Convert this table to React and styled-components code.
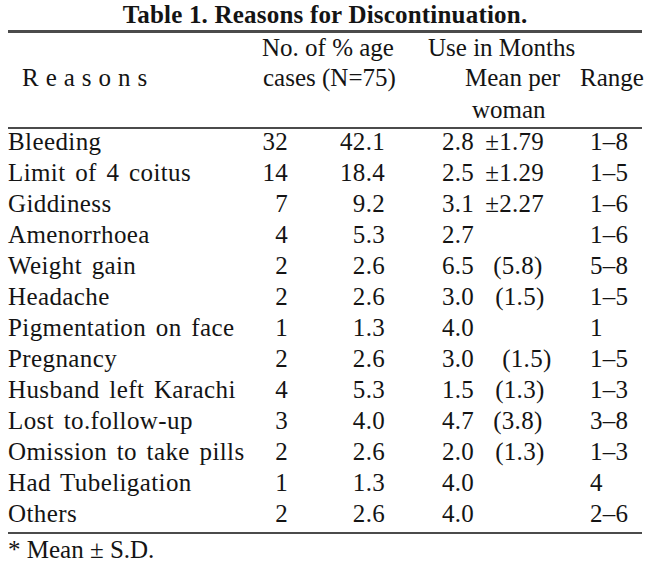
import React from 'react';
import styled, { createGlobalStyle } from 'styled-components';

const GlobalStyle = createGlobalStyle`
  body {
    margin: 0;
    background: #ffffff;
    color: #141414;
    font-family: "Liberation Serif", "Times New Roman", serif;
  }
`;

const COLUMNS = '232px 48px 97px 195px 1fr';

const Page = styled.div`
  width: 650px;
  padding: 0 8px;
  box-sizing: border-box;
  font-size: 25px;
`;

const Title = styled.h1`
  margin: 0;
  font-size: 25px;
  font-weight: bold;
  line-height: 30px;
  text-align: center;
  letter-spacing: 0.2px;
`;

const Rule = styled.div`
  height: ${p => p.$thick}px;
  background: #2b2b2b;
  opacity: 0.85;
`;

const Header = styled.div`
  display: grid;
  grid-template-columns: ${COLUMNS};
  grid-template-rows: 30px 32px 32px;
  line-height: 30px;
`;

const HeadCell = styled.div`
  grid-column: ${p => p.$col};
  grid-row: ${p => p.$row};
  padding-left: ${p => p.$pad || 0}px;
  letter-spacing: ${p => p.$spread || 0}px;
  white-space: nowrap;
`;

const Body = styled.div`
  display: flex;
  flex-direction: column;
`;

const Row = styled.div`
  display: grid;
  grid-template-columns: ${COLUMNS};
  height: 31px;
  line-height: 25px;
  letter-spacing: 0.3px;
  white-space: nowrap;
`;

const Reason = styled.div`
  word-spacing: 3px;
  letter-spacing: 0.4px;
`;

const Num = styled.div`
  text-align: right;
`;

const Mean = styled.div`
  display: flex;
  padding-left: 57px;
`;

const Sd = styled.span`
  margin-left: ${p => p.$shift}px;
`;

const Range = styled.div`
  padding-left: 10px;
`;

const Footnote = styled.div`
  line-height: 30px;
  padding-top: 1px;
`;

const rows = [
  { reason: 'Bleeding', n: '32', pct: '42.1', mean: '2.8', sd: '±1.79', shift: 11, range: '1–8' },
  { reason: 'Limit of 4 coitus', n: '14', pct: '18.4', mean: '2.5', sd: '±1.29', shift: 11, range: '1–5' },
  { reason: 'Giddiness', n: '7', pct: '9.2', mean: '3.1', sd: '±2.27', shift: 11, range: '1–6' },
  { reason: 'Amenorrhoea', n: '4', pct: '5.3', mean: '2.7', range: '1–6' },
  { reason: 'Weight gain', n: '2', pct: '2.6', mean: '6.5', sd: '(5.8)', shift: 19, range: '5–8' },
  { reason: 'Headache', n: '2', pct: '2.6', mean: '3.0', sd: '(1.5)', shift: 21, range: '1–5' },
  { reason: 'Pigmentation on face', n: '1', pct: '1.3', mean: '4.0', range: '1' },
  { reason: 'Pregnancy', n: '2', pct: '2.6', mean: '3.0', sd: '(1.5)', shift: 28, range: '1–5' },
  { reason: 'Husband left Karachi', n: '4', pct: '5.3', mean: '1.5', sd: '(1.3)', shift: 21, range: '1–3' },
  { reason: 'Lost to.follow-up', n: '3', pct: '4.0', mean: '4.7', sd: '(3.8)', shift: 19, range: '3–8' },
  { reason: 'Omission to take pills', n: '2', pct: '2.6', mean: '2.0', sd: '(1.3)', shift: 21, range: '1–3' },
  { reason: 'Had Tubeligation', n: '1', pct: '1.3', mean: '4.0', range: '4' },
  { reason: 'Others', n: '2', pct: '2.6', mean: '4.0', range: '2–6' },
];

const App = () => {
  return (
    <Page>
      <GlobalStyle />
      <Title>Table 1. Reasons for Discontinuation.</Title>
      <Rule $thick={3} />
      <Header>
        <HeadCell $col="1" $row="2" $pad={14} $spread={7}>Reasons</HeadCell>
        <HeadCell $col="2 / 4" $row="1" $pad={22}>No. of % age</HeadCell>
        <HeadCell $col="2 / 4" $row="2" $pad={23}>cases (N=75)</HeadCell>
        <HeadCell $col="4 / 6" $row="1" $pad={43}>Use in Months</HeadCell>
        <HeadCell $col="4" $row="2" $pad={80}>Mean per</HeadCell>
        <HeadCell $col="4" $row="3" $pad={87}>woman</HeadCell>
        <HeadCell $col="5" $row="2">Range</HeadCell>
      </Header>
      <Rule $thick={2} />
      <Body>
        {rows.map(row => (
          <Row key={row.reason}>
            <Reason>{row.reason}</Reason>
            <Num>{row.n}</Num>
            <Num>{row.pct}</Num>
            <Mean>
              <span>{row.mean}</span>
              {row.sd && <Sd $shift={row.shift}>{row.sd}</Sd>}
            </Mean>
            <Range>{row.range}</Range>
          </Row>
        ))}
      </Body>
      <Rule $thick={2} />
      <Footnote>* Mean ± S.D.</Footnote>
    </Page>
  );
};

export default App;
